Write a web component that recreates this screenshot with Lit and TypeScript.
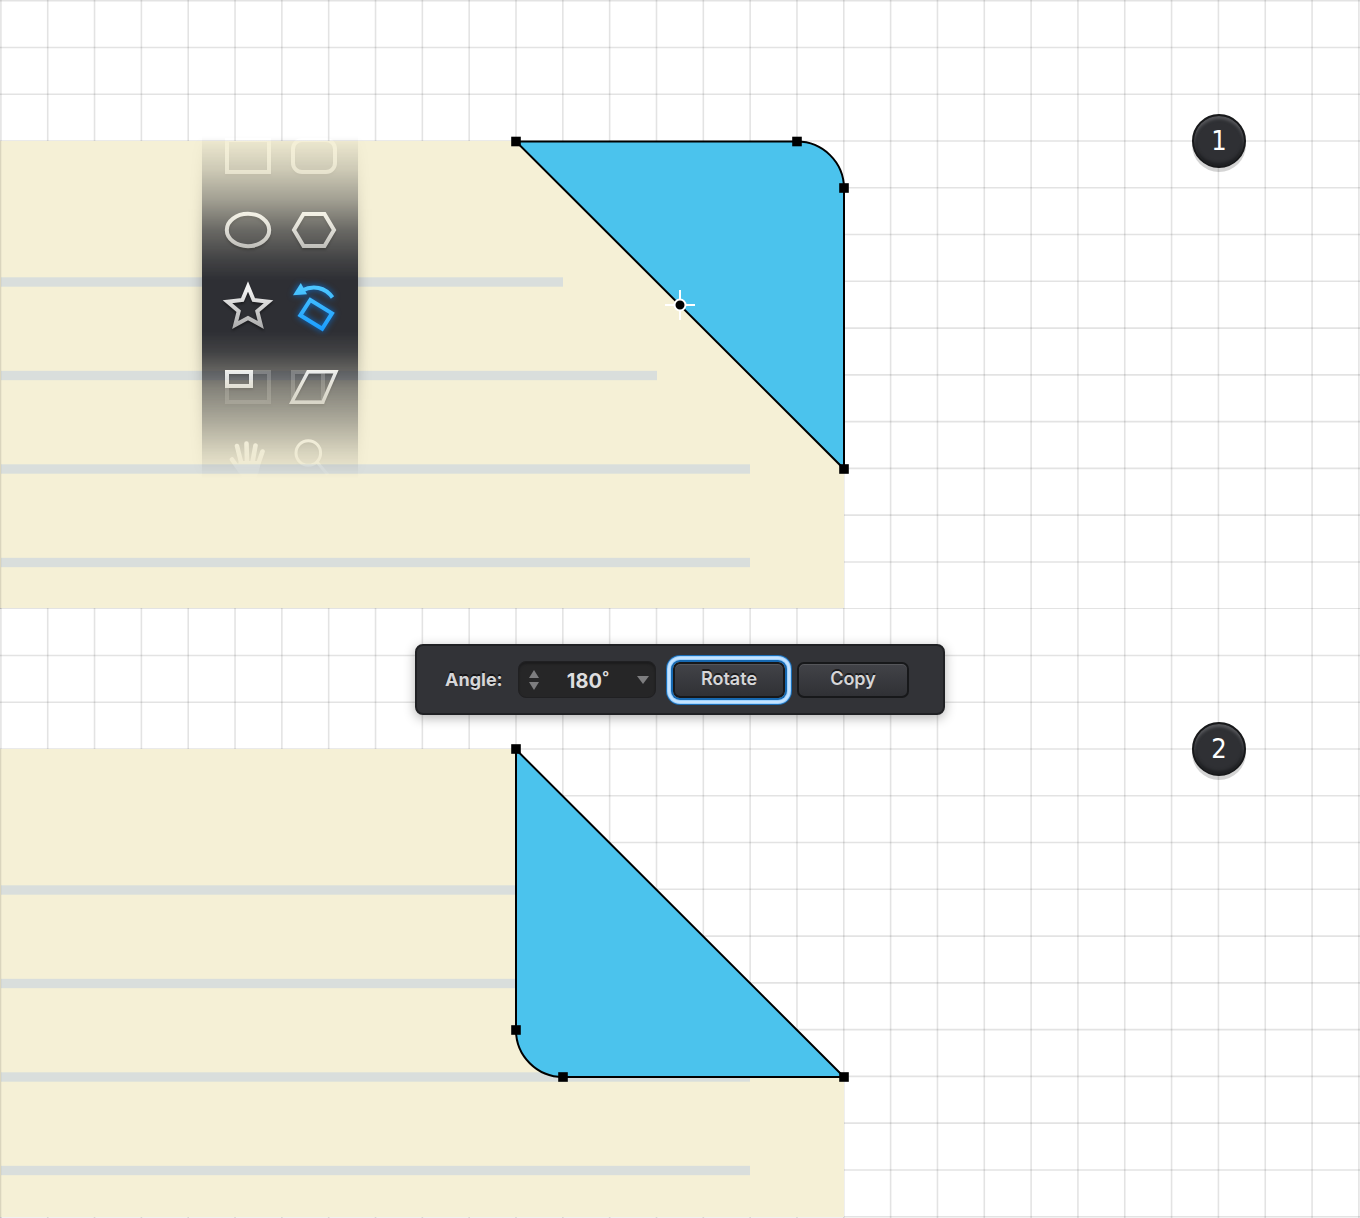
import { LitElement, html, svg, css } from "lit";
import { customElement, property } from "lit/decorators.js";

/* Drawing units: one section is 29 by 13 grid cells. */
const WIDTH = 1360;
const HEIGHT = 609;
const CELL_X = 1358 / 29;
const CELL_Y = 608 / 13;

const RULES = [
  { y: 282, end: 563 },
  { y: 375.5, end: 657 },
  { y: 469, end: 750 },
  { y: 562.5, end: 750 },
];

const range = (n: number) => Array.from({ length: n }, (_, i) => i);

@customElement("note-canvas")
class NoteCanvas extends LitElement {
  @property({ type: Boolean }) folded = false;

  static styles = css`
    :host { display: block; }
    .canvas { display: block; width: 100%; height: auto; }
    .grid { stroke: #000; stroke-opacity: 0.11; stroke-width: 1.6; }
    .sheet { fill: #f5f0d6; }
    .rule { fill: #d9dedc; }
    .flap { fill: #4bc3ed; stroke: #000; stroke-width: 2; }
    .node { fill: #000; }
    .pivot-arm { stroke: #fff; stroke-width: 2; }
    .pivot { fill: #000; stroke: #fff; stroke-width: 2; }
  `;

  render() {
    const sheet = this.folded
      ? "M0 141H516L844 469V609H0Z"
      : "M0 141H797A47 47 0 0 1 844 188V608H0Z";
    const flap = this.folded
      ? "M516 141.5L844 469H563A47 47 0 0 1 516 422Z"
      : "M516 141.5H797A47 47 0 0 1 844 188V469Z";
    const nodes = this.folded
      ? [[516, 141], [516, 422], [563, 469], [844, 469]]
      : [[516, 141.5], [797, 141.5], [844, 188], [844, 469]];
    return html`
      <svg class="canvas" viewBox="0 ${this.folded ? 1 : 0} ${WIDTH} ${HEIGHT}"
        role="img" aria-label=${this.folded ? "Folded corner" : "Corner before folding"}>
        <defs><clipPath id="sheet"><path d=${sheet} /></clipPath></defs>
        <g class="grid">
          ${range(30).map((i) => svg`<line x1=${0.9 + i * CELL_X} x2=${0.9 + i * CELL_X} y1="0" y2="610" />`)}
          ${range(14).map((i) => this.folded && i === 0 ? null : svg`<line y1=${0.7 + i * CELL_Y} y2=${0.7 + i * CELL_Y} x1="0" x2="1360" />`)}
        </g>
        <path class="sheet" d=${sheet} />
        <g clip-path="url(#sheet)">
          ${RULES.map((r) => svg`<rect class="rule" x="1" y=${r.y - 4.7} width=${r.end - 1} height="9.4" />`)}
        </g>
        <g class="grid"><line x1="0.5" x2="0.5" y1="141" y2="610" /></g>
        <path class="flap" d=${flap} />
        ${nodes.map(([x, y]) => svg`<rect class="node" x=${x - 4.8} y=${y - 4.8} width="9.6" height="9.6" />`)}
        ${this.folded ? null : svg`
          <path class="pivot-arm" d="M665 305H695M680 290V320" />
          <circle class="pivot" cx="680" cy="305" r="5.5" />`}
      </svg>`;
  }
}

/* Glyphs share one sheet; each button shows its own 66 by 76 window of it. */
const TOOLS = [
  { name: "Rectangle", top: 138, art: svg`<rect class="line" x="227" y="140" width="42" height="32" />` },
  { name: "Rounded rectangle", top: 138, art: svg`<rect class="line" x="293" y="140" width="42" height="32" rx="9" />` },
  { name: "Ellipse", top: 212, art: svg`<ellipse class="line" cx="248" cy="230" rx="21.2" ry="16.2" />` },
  { name: "Polygon", top: 212, art: svg`<path class="line" d="M303.5 214H324.5L334 230L324.5 246H303.5L294 230Z" />` },
  { name: "Star", top: 288, art: svg`<path class="line" d="M248 286.5L253.6 300L268.5 301.8L257.3 311.2L260.8 325L248 318L235.2 325L238.7 311.2L227.5 301.8L242.4 300Z" />` },
  { name: "Rotate", top: 288, active: true, art: svg`
      <path class="line" d="M302 290.5C313 285 325 287 332.5 297.5" />
      <path class="solid" d="M293 295.2L300.8 283L307 294.2Z" />
      <path class="line" d="M310.3 300L332 313.3L322.2 328.8L300.3 315.3Z" />` },
  { name: "Scale", top: 370, art: svg`
      <rect class="line ghost" x="227" y="372" width="42" height="30" />
      <rect class="line" x="227" y="372" width="24" height="14" />` },
  { name: "Shear", top: 370, art: svg`
      <rect class="line ghost" x="293" y="372" width="30" height="30" />
      <path class="line thin" d="M308 371.8H336L322.8 402.2H291.8Z" />` },
  { name: "Hand", top: 430, art: svg`
      <path class="finger" d="M241.5 464L237 446M247 462L246.5 443.5M252.5 462L255.5 445.5M257.5 466L262.5 451.5M241 472L232 459.5" />
      <path class="solid" d="M239 461L258 461L260 466Q258 478 253 480H244Q241 476 237 468Z" />` },
  { name: "Zoom", top: 430, art: svg`
      <circle class="line hair" cx="308.3" cy="453" r="12.3" />
      <path class="line hair" d="M317 462L328 475" />` },
];

@customElement("tool-palette")
class ToolPalette extends LitElement {
  static styles = css`
    :host { display: block; }
    .fade {
      padding: 0 16px;
      mask-image: linear-gradient(
        transparent 20px, rgb(0 0 0 / 0.06) 28px, rgb(0 0 0 / 0.2) 54px,
        rgb(0 0 0 / 0.42) 84px, rgb(0 0 0 / 0.7) 114px, rgb(0 0 0 / 0.9) 144px,
        #000 164px, #000 216px, rgb(0 0 0 / 0.9) 236px,
        rgb(0 0 0 / 0.57) 272px, rgb(0 0 0 / 0.37) 304px,
        rgb(0 0 0 / 0.15) 336px, transparent 362px);
    }
    .tools {
      display: grid;
      grid-template-columns: repeat(2, 66px);
      grid-auto-rows: 76px;
      padding: 0 11px 0 13px;
      background: #2e2f34;
      box-shadow: 0 0 12px rgb(0 0 0 / 0.3);
    }
    .tool { margin: 0; padding: 0; border: 0; background: none; }
    .glyph { display: block; width: 66px; height: 76px; filter: drop-shadow(0 2px 1px rgb(0 0 0 / 0.4)); }
    .active .glyph { filter: drop-shadow(0 0 3px rgb(0 130 255 / 0.8)); }
    .light { stop-color: #f4f4f4; }
    .shade { stop-color: #a8a8a8; }
    .active .light { stop-color: #4cc6ff; }
    .active .shade { stop-color: #1b9dff; }
    .line { fill: none; stroke: inherit; stroke-width: 4; }
    .thin { stroke-width: 3.4; }
    .hair { stroke-width: 3; }
    .ghost { opacity: 0.25; }
    .solid { stroke: none; }
    .finger { fill: none; stroke-width: 4.6; stroke-linecap: round; }
  `;

  render() {
    return html`
      <div class="fade">
        <div class="tools" role="toolbar" aria-label="Tools">
          ${TOOLS.map((tool, i) => html`
            <button type="button" aria-label=${tool.name} class="tool ${tool.active ? "active" : ""}">
              <svg class="glyph" aria-hidden="true"
                viewBox="${215 + (i % 2) * 66} ${116 + Math.floor(i / 2) * 76} 66 76">
                <defs>
                  <linearGradient id="tone-${i}" gradientUnits="userSpaceOnUse"
                    x1="0" x2="0" y1=${tool.top} y2=${tool.top + 42}>
                    <stop class="light" offset="0" /><stop class="shade" offset="1" />
                  </linearGradient>
                </defs>
                <g fill="url(#tone-${i})" stroke="url(#tone-${i})">${tool.art}</g>
              </svg>
            </button>`)}
        </div>
      </div>`;
  }
}

@customElement("rotate-bar")
class RotateBar extends LitElement {
  static styles = css`
    :host { display: block; }
    .bar {
      display: flex;
      align-items: center;
      box-sizing: border-box;
      height: 71px;
      padding: 0 34px 0 28px;
      border: 2px solid #202124;
      border-radius: 8px;
      background: #323337;
      box-shadow: 0 3px 12px rgb(0 0 0 / 0.3);
      font: 700 18px/24px Inter, "Liberation Sans", sans-serif;
      color: #d6d6d8;
    }
    .label { width: 73px; text-shadow: 0 -2px 0 #151517; }
    .field {
      display: flex;
      align-items: center;
      box-sizing: border-box;
      width: 138px;
      height: 37px;
      margin-right: 17px;
      padding: 0 6px 0 10px;
      border: 1px solid #202022;
      border-radius: 8px;
      background: #262627;
      box-shadow: inset 0 2px 2px #1c1c1d;
    }
    .steps { display: grid; gap: 4px; }
    .step, .menu { display: block; margin: 0; padding: 0; border: 0; background: none; color: #7d7d7f; }
    .arrow { display: block; fill: currentColor; }
    .angle {
      flex: 1;
      min-width: 0;
      box-sizing: border-box;
      padding: 2px 0 0;
      border: 0;
      outline: 0;
      background: none;
      font: 700 20px/24px Inter, "Liberation Sans", sans-serif;
      color: #dededf;
      text-align: center;
    }
    .action {
      box-sizing: border-box;
      width: 112px;
      height: 36px;
      margin: 0;
      padding: 0 0 2px;
      border: 2px solid #17181a;
      border-radius: 7px;
      background: linear-gradient(#424348, #303135);
      box-shadow: inset 0 1px 0 #55565a;
      font: 600 18px/24px Inter, "Liberation Sans", sans-serif;
      color: #d6d6d8;
      text-shadow: 0 -2px 0 #1b1b1d;
    }
    .action + .action { margin-left: 12px; }
    .default {
      box-shadow: inset 0 1px 0 #55565a, 0 0 0 2px #1668b0, 0 0 0 3px #9fd2ff,
        0 0 0 5px #c4e3ff, 0 0 0 6px #9fd2ff, 0 0 0 7px #1a6db6;
    }
  `;

  render() {
    return html`
      <form class="bar" @submit=${(e: Event) => e.preventDefault()}>
        <label class="label" for="angle">Angle:</label>
        <div class="field">
          <div class="steps">
            <button class="step" type="button" aria-label="Increase angle">
              <svg class="arrow" width="10" height="8" viewBox="0 0 10 8"><path d="M0 8L5 0L10 8Z" /></svg>
            </button>
            <button class="step" type="button" aria-label="Decrease angle">
              <svg class="arrow" width="10" height="8" viewBox="0 0 10 8"><path d="M0 0H10L5 8Z" /></svg>
            </button>
          </div>
          <input class="angle" id="angle" type="text" value="180˚" />
          <button class="menu" type="button" aria-label="Preset angles">
            <svg class="arrow" width="12" height="8" viewBox="0 0 12 8"><path d="M0 0H12L6 8Z" /></svg>
          </button>
        </div>
        <button class="action default" type="submit">Rotate</button>
        <button class="action" type="button">Copy</button>
      </form>`;
  }
}

@customElement("app-root")
class AppRoot extends LitElement {
  static styles = css`
    :host { display: block; background: #fff; }
    .step { position: relative; }
    .number {
      position: absolute;
      top: 114px;
      right: 114px;
      display: grid;
      place-items: center;
      box-sizing: border-box;
      width: 54px;
      height: 54px;
      border: 2px solid #18191b;
      border-radius: 50%;
      background: #2f3034;
      box-shadow: inset 0 3px 3px #55565a, inset 0 -3px 3px #1f2023, 0 4px 0 rgb(0 0 0 / 0.17);
      font: 400 27px/32px "DejaVu Sans Condensed", "DejaVu Sans", sans-serif;
      color: #fff;
    }
    .second .number { top: 113px; }
    .palette { position: absolute; left: 186px; top: 116px; }
    .rotate { position: absolute; top: 35px; left: 50%; transform: translateX(-50%); width: 530px; }
  `;

  render() {
    return html`
      <main>
        <section class="step">
          <note-canvas></note-canvas>
          <tool-palette class="palette"></tool-palette>
          <span class="number">1</span>
        </section>
        <section class="step second">
          <note-canvas folded></note-canvas>
          <rotate-bar class="rotate"></rotate-bar>
          <span class="number">2</span>
        </section>
      </main>`;
  }
}
